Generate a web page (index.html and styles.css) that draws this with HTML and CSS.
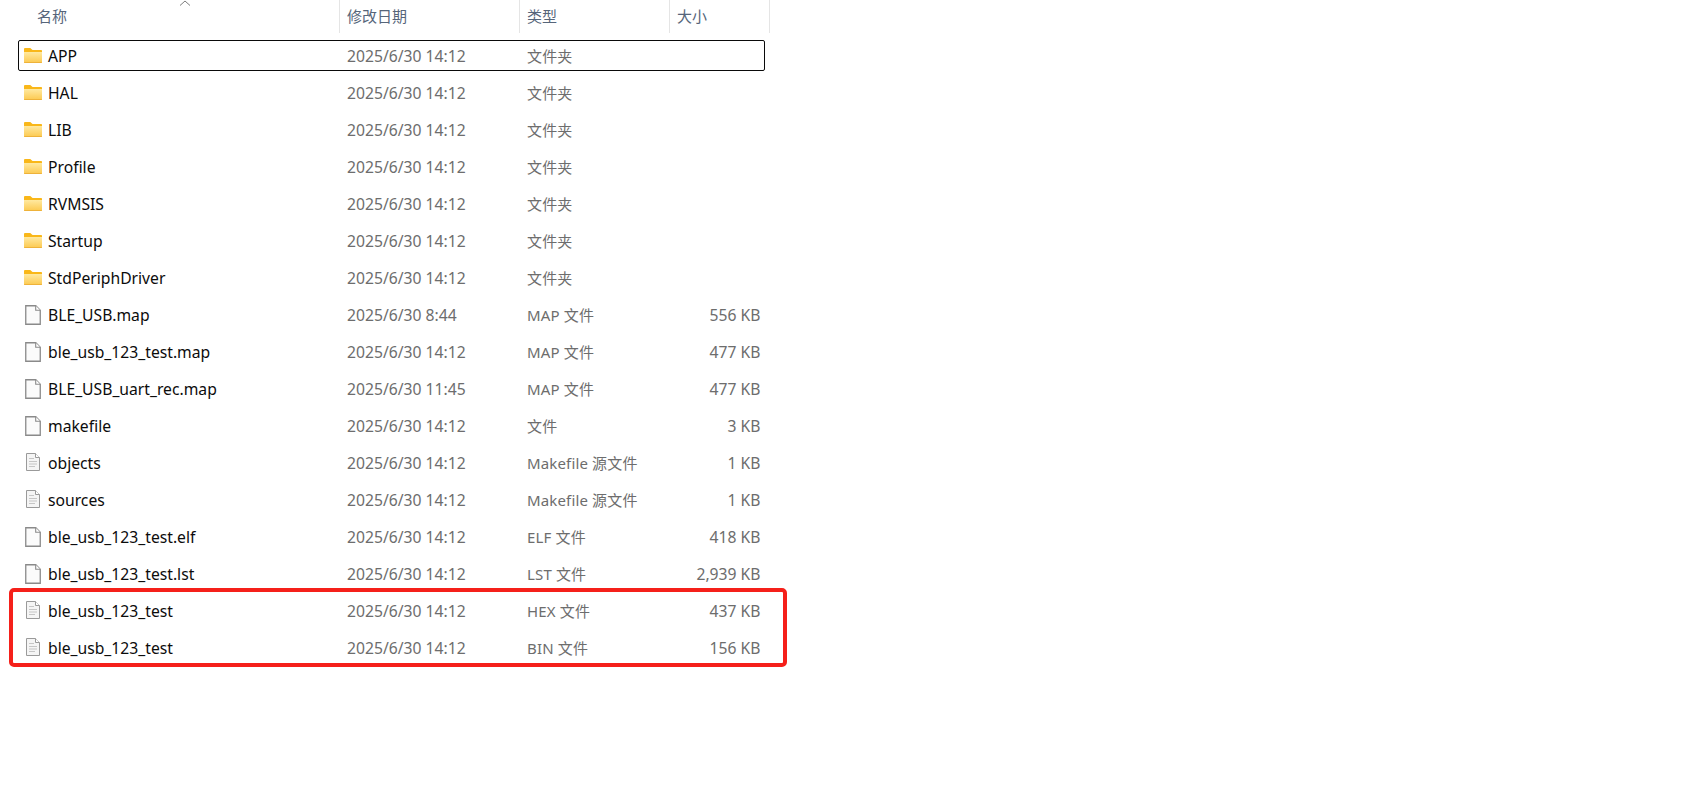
FILE: index.html
```html
<!DOCTYPE html>
<html lang="zh">
<head>
<meta charset="utf-8">
<title>文件列表</title>
<link rel="stylesheet" href="styles.css">
</head>
<body>
<svg class="defs" width="0" height="0" aria-hidden="true">
  <defs>
    <linearGradient id="fg" x1="0" y1="0" x2="0" y2="1"><stop offset="0" stop-color="#ffe9a0"/><stop offset="1" stop-color="#fcc94f"/></linearGradient>
    <symbol id="folder" viewBox="0 0 18 15">
      <path d="M0 1.2C0 .5.5 0 1.2 0h4.600c.4 0 .7.1 1 .4L8.600 2H17c.6 0 1 .4 1 1v1H0z" fill="#f9b719"/>
      <path d="M0 4h18v10c0 .6-.4 1-1 1H1c-.6 0-1-.4-1-1z" fill="url(#fg)"/>
      <path d="M0 14h18v.2c0 .5-.4.8-.8.8H.8c-.4 0-.8-.3-.8-.8z" fill="#eeb23a"/>
    </symbol>
    <symbol id="blank" viewBox="0 0 16 20">
      <path d="M.75.75h10l4.500 4.500v14h-14.500z" fill="#fbfbfb" stroke="#8a8a8a" stroke-width="1.300"/>
      <path d="M10.700.75v4.500h4.500" fill="#fff" stroke="#8a8a8a" stroke-width="1.100"/>
    </symbol>
    <symbol id="text" viewBox="0 0 14 18">
      <path d="M.5.5h9l4 4v13H.5z" fill="#f5f5f5" stroke="#9a9a9a"/>
      <path d="M9.500.5v4h4" fill="#fff" stroke="#9a9a9a"/>
      <path d="M3 5.500h5M3 8.500h8M3 11h8M3 13.500h6" stroke="#c6c6c6" stroke-width="1.200" fill="none"/>
    </symbol>
  </defs>
</svg>
<main class="explorer">
  <header class="head">
    <div class="hcell name">名称<svg class="sort" width="12" height="6" viewBox="0 0 12 6"><path d="M1 5.500 6 1l5 4.500" fill="none" stroke="#7d7d7d"/></svg></div>
    <div class="hcell">修改日期</div>
    <div class="hcell">类型</div>
    <div class="hcell">大小</div>
  </header>
  <div class="rows">
    <div class="row selected"><span class="fname"><svg class="ico fold"><use href="#folder"/></svg>APP</span><span class="date">2025/6/30 14:12</span><span class="type">文件夹</span><span class="size"></span></div>
    <div class="row"><span class="fname"><svg class="ico fold"><use href="#folder"/></svg>HAL</span><span class="date">2025/6/30 14:12</span><span class="type">文件夹</span><span class="size"></span></div>
    <div class="row"><span class="fname"><svg class="ico fold"><use href="#folder"/></svg>LIB</span><span class="date">2025/6/30 14:12</span><span class="type">文件夹</span><span class="size"></span></div>
    <div class="row"><span class="fname"><svg class="ico fold"><use href="#folder"/></svg>Profile</span><span class="date">2025/6/30 14:12</span><span class="type">文件夹</span><span class="size"></span></div>
    <div class="row"><span class="fname"><svg class="ico fold"><use href="#folder"/></svg>RVMSIS</span><span class="date">2025/6/30 14:12</span><span class="type">文件夹</span><span class="size"></span></div>
    <div class="row"><span class="fname"><svg class="ico fold"><use href="#folder"/></svg>Startup</span><span class="date">2025/6/30 14:12</span><span class="type">文件夹</span><span class="size"></span></div>
    <div class="row"><span class="fname"><svg class="ico fold"><use href="#folder"/></svg>StdPeriphDriver</span><span class="date">2025/6/30 14:12</span><span class="type">文件夹</span><span class="size"></span></div>
    <div class="row"><span class="fname"><svg class="ico doc"><use href="#blank"/></svg>BLE_USB.map</span><span class="date">2025/6/30 8:44</span><span class="type">MAP 文件</span><span class="size">556 KB</span></div>
    <div class="row"><span class="fname"><svg class="ico doc"><use href="#blank"/></svg>ble_usb_123_test.map</span><span class="date">2025/6/30 14:12</span><span class="type">MAP 文件</span><span class="size">477 KB</span></div>
    <div class="row"><span class="fname"><svg class="ico doc"><use href="#blank"/></svg>BLE_USB_uart_rec.map</span><span class="date">2025/6/30 11:45</span><span class="type">MAP 文件</span><span class="size">477 KB</span></div>
    <div class="row"><span class="fname"><svg class="ico doc"><use href="#blank"/></svg>makefile</span><span class="date">2025/6/30 14:12</span><span class="type">文件</span><span class="size">3 KB</span></div>
    <div class="row"><span class="fname"><svg class="ico txt"><use href="#text"/></svg>objects</span><span class="date">2025/6/30 14:12</span><span class="type">Makefile 源文件</span><span class="size">1 KB</span></div>
    <div class="row"><span class="fname"><svg class="ico txt"><use href="#text"/></svg>sources</span><span class="date">2025/6/30 14:12</span><span class="type">Makefile 源文件</span><span class="size">1 KB</span></div>
    <div class="row"><span class="fname"><svg class="ico doc"><use href="#blank"/></svg>ble_usb_123_test.elf</span><span class="date">2025/6/30 14:12</span><span class="type">ELF 文件</span><span class="size">418 KB</span></div>
    <div class="row"><span class="fname"><svg class="ico doc"><use href="#blank"/></svg>ble_usb_123_test.lst</span><span class="date">2025/6/30 14:12</span><span class="type">LST 文件</span><span class="size">2,939 KB</span></div>
    <div class="row"><span class="fname"><svg class="ico txt"><use href="#text"/></svg>ble_usb_123_test</span><span class="date">2025/6/30 14:12</span><span class="type">HEX 文件</span><span class="size">437 KB</span></div>
    <div class="row"><span class="fname"><svg class="ico txt"><use href="#text"/></svg>ble_usb_123_test</span><span class="date">2025/6/30 14:12</span><span class="type">BIN 文件</span><span class="size">156 KB</span></div>
  </div>
  <div class="highlight"></div>
</main>
</body>
</html>
```
FILE: styles.css
```css
* { box-sizing: border-box; }
html, body { margin: 0; background: #fff; }
body { font-family: "Noto Sans", "Noto Sans CJK SC", sans-serif; font-size: 15px; color: #6d6d6d; height: 810px; overflow: hidden; }
.defs { position: absolute; }
.explorer { position: relative; width: 1701px; height: 810px; }
.head { display: grid; grid-template-columns: 340px 180px 150px 100px; width: 770px; height: 32px; }
.hcell { position: relative; padding-left: 7px; border-right: 1px solid #e5e5e5; color: #56657a; line-height: 33px; font-size: 15px; white-space: nowrap; }
.hcell.name { padding-left: 37px; }
.sort { position: absolute; left: 179px; top: 0; }
.rows { display: flex; flex-direction: column; gap: 6px; margin: 8px 0 0 18px; width: 747px; }
.row { display: grid; grid-template-columns: 328px 180px 150px 83.500px; align-items: center; height: 31px; padding-top: 2px; border: 1px solid transparent; border-radius: 2px; white-space: nowrap; line-height: 27px; }
.row.selected { border-color: #0a0a0a; }
.fname { display: flex; align-items: center; color: #0c0c0c; padding-left: 29px; position: relative; font-size: 15.7px; }
.date, .size { font-size: 15.7px; }
.type { letter-spacing: .15px; }
.ico { position: absolute; }
.ico.fold { left: 5px; top: 5px; width: 18px; height: 15px; }
.ico.doc { left: 6px; top: 3px; width: 16px; height: 20px; }
.ico.txt { left: 7px; top: 3px; width: 14px; height: 18px; }
.size { text-align: right; }
.highlight { position: absolute; left: 9px; top: 588px; width: 778px; height: 79px; border: 4px solid #f5201a; border-radius: 5px; }
```
